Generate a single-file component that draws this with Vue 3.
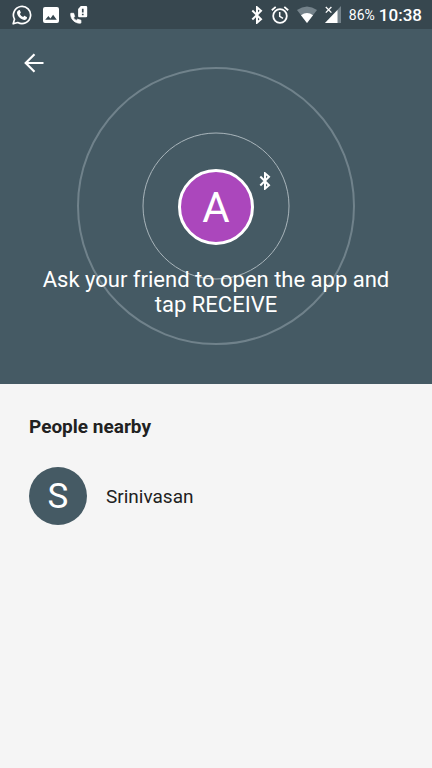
<script setup>
const people = [{ name: 'Srinivasan', initial: 'S' }]
</script>

<template>
  <div class="screen">
    <div class="status">
      <div class="notifications">
        <svg class="whatsapp" viewBox="0 0 20 20" aria-hidden="true">
          <path d="M1.2 18.8 2.5 14.200A8.600 8.600 0 1 1 5.800 17.500Z" fill="none" stroke="#fff" stroke-width="1.700" stroke-linejoin="round" />
          <path d="M6.900 5.200c.4-.2.900-.1 1.100.3l.8 1.900c.1.300 0 .5-.2.700l-.7.900c.8 1.500 1.900 2.500 3.300 3.100l.9-1c.2-.2.500-.3.700-.2l1.900 1c.3.200.4.400.3.800-.2 1.500-1.500 2.300-2.900 2.200-3.500-.4-7.100-3.900-7.100-7.400 0-1 .8-2 1.900-2.300Z" fill="#fff" />
        </svg>
        <svg class="photo" viewBox="0 0 16 16" aria-hidden="true">
          <path fill-rule="evenodd" d="M2 0h12a2 2 0 0 1 2 2v12a2 2 0 0 1-2 2H2a2 2 0 0 1-2-2V2A2 2 0 0 1 2 0Zm.2 12.800h11.600L10.100 7.800l-2.700 3.700-2-2.400Z" fill="#fff" />
        </svg>
        <svg class="call" viewBox="0 0 18 18" aria-hidden="true">
          <path d="M.8 7.300h2.900l.9 3.400-1.200 1.200c.8 1.200 1.700 1.900 2.800 2.500l1.300-1.100 3.400.9v2.900c-5.900.7-10.800-4.100-10.100-9.800Z" fill="#fff" stroke="#fff" stroke-width=".8" stroke-linejoin="round" />
          <path fill-rule="evenodd" d="M10.800 0H16a1.200 1.200 0 0 1 1.200 1.200v8.900a1.200 1.200 0 0 1-1.200 1.200H9.300a1.200 1.200 0 0 1-1.200-1.200V3Zm1.100 2.700v3.800h1.700V2.700Zm0 5v1.600h1.700V7.700Z" fill="#fff" />
        </svg>
      </div>
      <div class="system">
        <svg class="bluetooth" viewBox="0 0 12 18" aria-hidden="true">
          <path d="m1.300 4.500 8.700 8.700-4 3.500V1.300l4 3.500-8.700 8.700" />
        </svg>
        <svg class="alarm" viewBox="0 0 18 18" aria-hidden="true">
          <g fill="none" stroke="#fff" stroke-width="1.800">
            <circle cx="9" cy="10" r="6.800" />
            <path d="M.8 4.200 4.700.9M17.200 4.200 13.300.9" />
            <path d="M8.700 6v4.400l3.300 2" stroke-width="1.500" />
          </g>
        </svg>
        <svg class="wifi" viewBox="0 0 20 17" aria-hidden="true">
          <path d="M0 4Q10-3 20 4L10 17Z" fill="#74828a" />
          <path d="M4 9.200Q10 4.600 16 9.200L10 17Z" fill="#fff" />
        </svg>
        <svg class="signal" viewBox="0 0 16 17" aria-hidden="true">
          <path d="M16 0v17H0Z" fill="#74828a" />
          <path d="M12.500 4v13H0Z" fill="#fff" />
          <path d="m.8 1 5.600 5.600M6.400 1 .8 6.600" stroke="#fff" stroke-width="1.300" />
        </svg>
        <span class="battery">86%</span>
        <span class="time">10:38</span>
      </div>
    </div>

    <header class="hero">
      <svg class="rings" viewBox="0 0 278 278" aria-hidden="true">
        <circle cx="139" cy="139" r="138" stroke="#70828b" stroke-width="2" />
        <circle cx="139" cy="139" r="73" stroke="#a9b5bb" stroke-width="1" />
      </svg>
      <div class="me">
        A
        <svg class="bluetooth badge" viewBox="0 0 12 18" aria-hidden="true">
          <path d="m1.300 4.500 8.700 8.700-4 3.500V1.300l4 3.500-8.700 8.700" />
        </svg>
      </div>
      <button class="back" type="button" aria-label="Back">
        <svg viewBox="0 0 20 20" aria-hidden="true">
          <path d="M19.500 10H2M10.500 1.200 1.700 10l8.800 8.800" fill="none" stroke="#fff" stroke-width="2.200" />
        </svg>
      </button>
      <p class="prompt">Ask your friend to open the app and tap RECEIVE</p>
    </header>

    <main class="nearby">
      <h1>People nearby</h1>
      <ul>
        <li v-for="person in people" :key="person.name">
          <button class="person" type="button">
            <span class="avatar" aria-hidden="true">{{ person.initial }}</span>
            <span>{{ person.name }}</span>
          </button>
        </li>
      </ul>
    </main>
  </div>
</template>

<style>
body {
  margin: 0;
  background: #f5f5f5;
}
</style>

<style scoped>
.screen {
  min-height: 100vh;
  background: #f5f5f5;
  color: #212121;
  font-family: Roboto, sans-serif;
}

.status {
  display: flex;
  justify-content: space-between;
  height: 29px;
  padding: 0 10px 0 12px;
  background: #37474f;
  color: #fff;
}

.notifications,
.system {
  display: flex;
  align-items: center;
}

.notifications {
  gap: 11px;
}

.whatsapp {
  width: 20px;
  height: 20px;
}

.photo {
  width: 16px;
  height: 16px;
}

.call,
.alarm {
  width: 18px;
  height: 18px;
}

.system {
  gap: 8px;
}

.bluetooth {
  width: 12px;
  height: 18px;
  fill: none;
  stroke: #fff;
  stroke-width: 2;
}

.wifi {
  width: 20px;
  height: 17px;
}

.signal {
  width: 16px;
  height: 17px;
}

.battery {
  font-size: 14px;
}

.time {
  margin-left: -4px;
  font-size: 17px;
  font-weight: 500;
}

.hero {
  display: grid;
  justify-items: center;
  align-items: center;
  background: #455a64;
  color: #fff;
}

.hero > * {
  grid-area: 1 / 1;
}

.rings {
  width: 278px;
  height: 278px;
  margin: 38px 0 39px;
  fill: none;
}

.me {
  position: relative;
  box-sizing: border-box;
  width: 76px;
  height: 76px;
  border: 3px solid #fff;
  border-radius: 50%;
  background: #ab47bc;
  font-size: 42px;
  line-height: 72px;
  text-align: center;
}

.badge {
  position: absolute;
  top: 0;
  right: -20px;
}

.back {
  align-self: start;
  justify-self: start;
  display: grid;
  place-items: center;
  width: 48px;
  height: 48px;
  margin: 10px;
  padding: 0;
  border: 0;
  background: none;
  cursor: pointer;
}

.back svg {
  width: 20px;
  height: 20px;
}

.prompt {
  align-self: end;
  margin: 0;
  padding: 0 40px 67px;
  font-size: 22px;
  line-height: 25px;
  text-align: center;
}

.nearby {
  padding: 30px 29px;
}

h1 {
  margin: 0 0 28px;
  font-size: 19px;
  font-weight: 700;
  line-height: 25px;
}

ul {
  margin: 0;
  padding: 0;
  list-style: none;
}

.person {
  display: flex;
  align-items: center;
  gap: 19px;
  width: 100%;
  padding: 0;
  border: 0;
  background: none;
  color: inherit;
  font-family: inherit;
  font-size: 19px;
  text-align: left;
  cursor: pointer;
}

.avatar {
  width: 58px;
  height: 58px;
  border-radius: 50%;
  background: #455a64;
  color: #fff;
  font-size: 35px;
  line-height: 60px;
  text-align: center;
}
</style>
